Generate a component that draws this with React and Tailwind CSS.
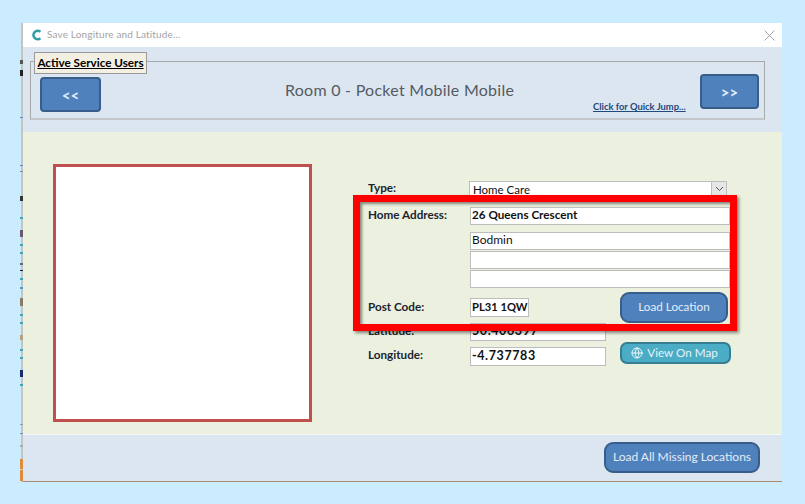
import React from "react";
import { Globe } from "lucide-react";

const marks = [
  [60, 4, "#555"], [70, 6, "#222"], [117, 1, "#5b8fc7"], [165, 1, "#5b8fc7"], [171, 1, "#888"], [196, 5, "#333"],
  [217, 2, "#4a9fb8"], [230, 7, "#6a5a70"], [244, 2, "#4a9fb8"], [252, 2, "#4a9fb8"], [263, 2, "#667"], [270, 1, "#123"],
  [278, 2, "#4a9fb8"], [287, 2, "#4a9fb8"], [298, 8, "#8a7a68"], [314, 2, "#4a9fb8"], [322, 2, "#4a9fb8"],
  [335, 5, "#b5a080"], [349, 2, "#4a9fb8"], [357, 2, "#4a9fb8"], [370, 7, "#1a2a70"], [384, 2, "#4a9fb8"],
  [424, 1, "#999"], [433, 1, "#6f94c4"], [445, 2, "#aaa"], [459, 10, "#e08a3c"], [470, 11, "#e08a3c"],
];

const field = "border border-[#bdbdbd] bg-white flex items-center px-px text-[#111] leading-none whitespace-nowrap";
const label = "w-[102px] shrink-0 text-[11.7px] font-bold text-[#1c2430] leading-none whitespace-nowrap";
const blueBtn = "flex items-center justify-center bg-[#4f81bd] border-2 border-[#385d8a] text-[#e3ecf7] whitespace-nowrap";

export default function App() {
  return (
    <div className="relative w-[805px] h-[504px] overflow-hidden bg-[#cbebff] pt-[23px] pl-[20px] font-['Lato',sans-serif]">
      <div className="flex w-[762px] h-[459px]">
        <div className="relative w-[3px] h-full shrink-0">
          <div className="ml-px w-[2px] h-full bg-[#c4c4c0]" />
          {marks.map(([top, h, c], i) => (
            <span key={i} className="absolute left-0 w-[3px]" style={{ top: top - 23, height: h, background: c }} />
          ))}
        </div>
        <div className="flex flex-col w-[759px] h-full border-b border-[#a98a70]">
          <div className="flex items-center h-[24px] bg-white shrink-0">
            <svg width="11" height="12" viewBox="0 0 11 12" className="ml-[8px]">
              <path d="M9.4 2.8A4.2 4.2 0 1 0 9.4 9.2" fill="none" stroke="#2f9fa8" strokeWidth="2.6" />
            </svg>
            <span className="ml-[5px] text-[10px] text-[#a3a3a3] tracking-[0.15px] whitespace-nowrap pb-px">Save Longiture and Latitude...</span>
            <svg width="11" height="11" viewBox="0 0 11 11" className="ml-auto mr-[7px]">
              <path d="M.5.5l10 10M10.5.5l-10 10" stroke="#9a9a9a" strokeWidth="0.9" fill="none" />
            </svg>
          </div>

          <div className="h-[85px] bg-[#dce6f1] pt-[14px] pl-[7px] pr-[17px] shrink-0">
            <div className="relative flex items-start h-[59px] border border-[#a9a9a9] border-b-2 border-b-[#c4c7cc] pl-[9px] pr-[5px]">
              <span className="absolute left-[3px] -top-[10px] h-[22px] w-[113px] flex items-center justify-center bg-[#f3efe3] border border-[#9a9a9a] text-[11.7px] font-bold text-black underline leading-none whitespace-nowrap">
                Active Service Users
              </span>
              <button className={`${blueBtn} w-[61px] h-[35px] rounded-[4px] mt-[15px] pt-[2px] font-bold text-[15px] shrink-0`}>&lt;&lt;</button>
              <span className="ml-[184px] mt-[17px] text-[16px] tracking-[0.26px] leading-[22px] text-[#555b63] whitespace-nowrap shrink-0">Room 0 - Pocket Mobile Mobile</span>
              <a className="absolute left-[562px] top-[38px] text-[9.4px] leading-[13px] font-bold text-[#1f497d] underline whitespace-nowrap">Click for Quick Jump...</a>
              <button className={`${blueBtn} w-[59px] h-[35px] rounded-[4px] mt-[12px] pt-[2px] ml-auto font-bold text-[15px] shrink-0`}>&gt;&gt;</button>
            </div>
          </div>

          <div className="flex h-[302px] bg-[#ebf1de] pl-[30px] pt-[32px] shrink-0">
            <div className="w-[259px] h-[258px] bg-white border-[3px] border-[#c0504d] shrink-0" />
            <div className="ml-[56px] pt-[17px] flex flex-col">
              <div className="flex items-start h-[16px]">
                <span className={`${label} mt-px`}>Type:</span>
                <div className={`${field} -ml-px w-[258px] h-[16px] text-[11.5px]`}>
                  <span className="pl-[2px] pt-[2px]">Home Care</span>
                  <span className="ml-auto w-[15px] -mr-px h-full bg-[#e6e6e6] border-l border-[#bdbdbd] flex items-center justify-center">
                    <svg width="9" height="6" viewBox="0 0 9 6"><path d="M1 1l3.5 3.5L8 1" fill="none" stroke="#555" strokeWidth="1" /></svg>
                  </span>
                </div>
              </div>
              <div className="flex items-center h-[18px] mt-[10px]">
                <span className={`${label} pb-[2px]`}>Home Address:</span>
                <div className={`${field} w-[260px] h-[18px] font-bold text-[11.7px] pb-[2px]`}>26 Queens Crescent</div>
              </div>
              <div className={`${field} w-[260px] h-[18px] mt-[7px] ml-[102px] text-[12px] pb-[2px]`}>Bodmin</div>
              <div className={`${field} w-[260px] h-[18px] mt-px ml-[102px]`} />
              <div className={`${field} w-[260px] h-[18px] mt-px ml-[102px]`} />
              <div className="flex items-center h-[31px] mt-[4px]">
                <span className={`${label} pb-[2px]`}>Post Code:</span>
                <div className={`${field} w-[59px] h-[19px] font-bold text-[11.2px] pb-[2px]`}>PL31 1QW</div>
                <button className={`${blueBtn} w-[108px] h-[31px] rounded-[9px] ml-[91px] text-[11.7px] pb-px`}>Load Location</button>
              </div>
              <div className="flex items-center h-[18px]">
                <span className={`${label} pb-[2px]`}>Latitude:</span>
                <div className={`${field} w-[136px] h-[18px] font-bold text-[12.5px] tracking-[0.6px] pb-px`}>50.406397</div>
              </div>
              <div className="flex items-start h-[19px] mt-[6px]">
                <span className={`${label} mt-[2px]`}>Longitude:</span>
                <div className={`${field} w-[136px] h-[19px] font-bold text-[12.5px] tracking-[0.6px]`}>-4.737783</div>
                <button className="flex items-center justify-center gap-[4px] w-[111px] h-[22px] -mt-[5px] ml-[14px] pr-[2px] rounded-[7px] bg-[#4bacc6] border-2 border-[#357d91] text-[#e3f3f7] text-[11.7px] whitespace-nowrap">
                  <Globe size={12} strokeWidth={1.8} className="text-white" />
                  View On Map
                </button>
              </div>
            </div>
          </div>

          <div className="flex-1 flex items-start justify-end bg-[#dce6f1] border-t border-[#f4f7fb] pt-[7px] pr-[22px]">
            <button className={`${blueBtn} w-[156px] h-[31px] rounded-[9px] text-[12px] pb-px`}>Load All Missing Locations</button>
          </div>
        </div>
      </div>

      <div className="absolute left-[353px] top-[195px] w-[384px] h-[136px] border-[7px] border-[#ff0000] shadow-[2px_2px_3px_rgba(0,0,0,0.45),inset_2px_2px_3px_rgba(0,0,0,0.45)]" />
    </div>
  );
}
